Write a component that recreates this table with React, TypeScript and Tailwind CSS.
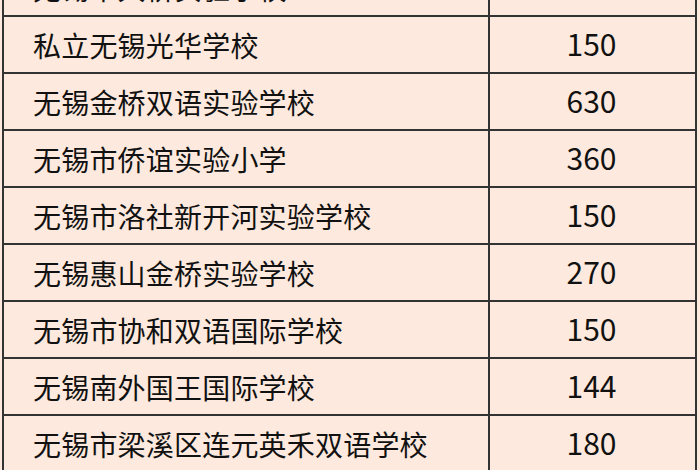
const rows: [string, string][] = [
  ["无锡市大桥实验学校", "240"],
  ["私立无锡光华学校", "150"],
  ["无锡金桥双语实验学校", "630"],
  ["无锡市侨谊实验小学", "360"],
  ["无锡市洛社新开河实验学校", "150"],
  ["无锡惠山金桥实验学校", "270"],
  ["无锡市协和双语国际学校", "150"],
  ["无锡南外国王国际学校", "144"],
  ["无锡市梁溪区连元英禾双语学校", "180"],
];

export default function App() {
  return (
    <div
      className="w-[700px] h-[470px] overflow-hidden bg-[#fde9dd]"
      style={{ fontFamily: '"Noto Sans CJK SC", "Noto Sans", sans-serif' }}
    >
      <div className="ml-[2px] w-[695px] border-x-2 border-[#333] mt-[-40px]">
        {rows.map(([name, num], i) => (
          <div key={i} className="flex h-[57px] border-b-2 border-[#333] text-[#111]">
            <div className="w-[486px] border-r-2 border-[#333] flex items-center pl-[29px] leading-none text-[28px] tracking-[0.2px]">
              {name}
            </div>
            <div className="flex-1 flex items-center justify-center leading-none pr-[2px] pb-[3px] text-[30px]">{num}</div>
          </div>
        ))}
      </div>
    </div>
  );
}
